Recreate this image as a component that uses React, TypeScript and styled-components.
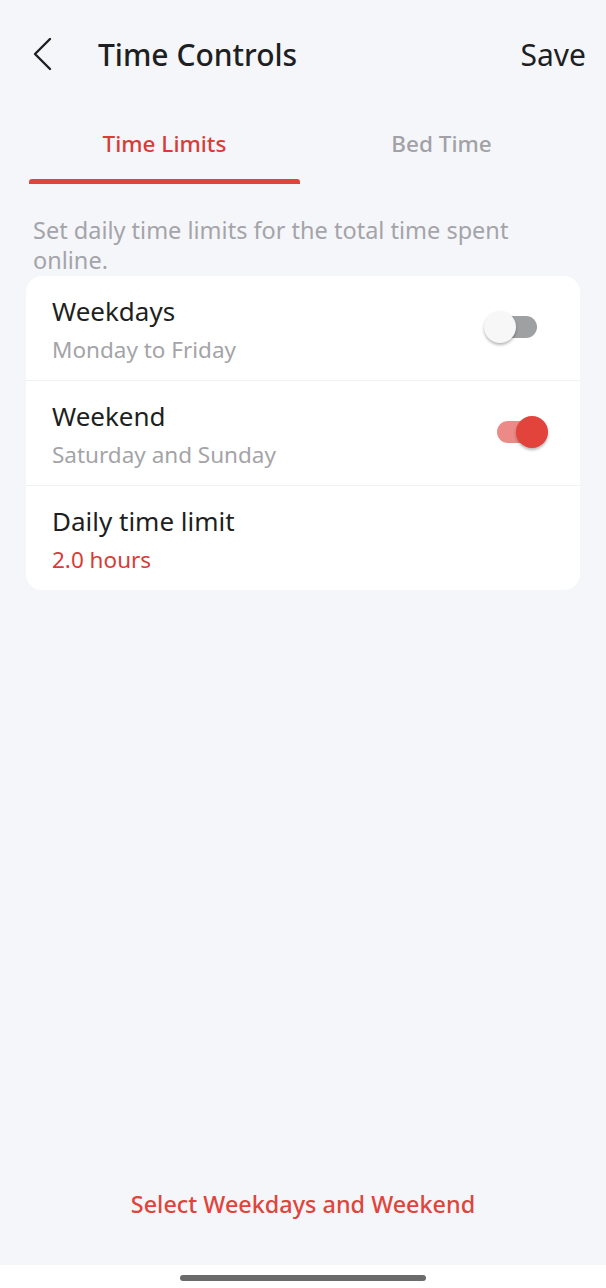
import React, { useState } from "react";
import styled, { createGlobalStyle } from "styled-components";

const Global = createGlobalStyle`
  html, body { margin: 0; padding: 0; background: #f5f6fa; }
  body { font-family: "Noto Sans", "Lato", sans-serif; -webkit-font-smoothing: antialiased; }
  * { box-sizing: border-box; }
`;

const Screen = styled.div`
  width: 606px;
  height: 1288px;
  display: flex;
  flex-direction: column;
  background: #f5f6fa;
`;

const Header = styled.header`
  height: 108px;
  display: flex;
  align-items: center;
  padding: 0 20px 0 31px;
`;

const BackButton = styled.button`
  width: 28px;
  height: 40px;
  border: 0;
  padding: 0;
  background: none;
  display: flex;
  align-items: center;
  justify-content: flex-start;
  color: #1d1f22;
`;

const Title = styled.h1`
  margin: 0 0 0 39px;
  flex: 1;
  font-size: 30px;
  font-weight: 500;
  color: #1d1f22;
`;

const SaveButton = styled.button`
  border: 0;
  background: none;
  padding: 0;
  font-family: inherit;
  font-size: 30px;
  font-weight: 400;
  color: #1d1f22;
`;

const TabBar = styled.div`
  display: flex;
  gap: 6px;
  padding: 0 29px;
`;

const Tab = styled.div<{ $active?: boolean }>`
  flex: 1;
  height: 76px;
  display: flex;
  flex-direction: column;
  align-items: center;
  justify-content: space-between;
  padding-top: 20px;
  font-size: 22.5px;
  font-weight: 500;
  color: ${(p) => (p.$active ? "#d93b36" : "#a1a1a6")};
`;

const Indicator = styled.div<{ $active?: boolean }>`
  width: 100%;
  height: 5px;
  border-radius: 3px 3px 0 0;
  background: ${(p) => (p.$active ? "#e2433b" : "transparent")};
`;

const Description = styled.p`
  margin: 31px 40px 1px 33px;
  font-size: 23.5px;
  line-height: 30px;
  color: #a4a4a9;
`;

const Card = styled.div`
  margin: 0 26px;
  background: #ffffff;
  border-radius: 16px;
  overflow: hidden;
`;

const Row = styled.div`
  height: 104px;
  display: flex;
  align-items: flex-start;
  padding: 19px 32px 0 26px;
  & + & { border-top: 1px solid #f0f1f4; height: 105px; }
`;

const RowText = styled.div`
  flex: 1;
  display: flex;
  flex-direction: column;
  gap: 8px;
`;

const RowTitle = styled.div`
  font-size: 26px;
  color: #1d1f22;
  line-height: 32px;
`;

const RowSub = styled.div<{ $accent?: boolean }>`
  font-size: 22.5px;
  line-height: 30px;
  color: ${(p) => (p.$accent ? "#d93b36" : "#a4a4a8")};
`;

const SwitchBox = styled.button`
  position: relative;
  width: 64px;
  height: 34px;
  margin-top: 15px;
  border: 0;
  padding: 0;
  background: none;
`;

const Track = styled.span<{ $on: boolean }>`
  position: absolute;
  left: 13px;
  top: 6px;
  width: 40px;
  height: 22px;
  border-radius: 11px;
  background: ${(p) => (p.$on ? "#ec8a87" : "#9fa0a2")};
`;

const Thumb = styled.span<{ $on: boolean }>`
  position: absolute;
  top: 1px;
  left: ${(p) => (p.$on ? "32px" : "0px")};
  width: 32px;
  height: 32px;
  border-radius: 50%;
  background: ${(p) => (p.$on ? "#e2433b" : "#f7f7f7")};
  box-shadow: 0 2px 3px rgba(0, 0, 0, 0.28);
`;

const Spacer = styled.div`
  flex: 1;
`;

const FooterAction = styled.button`
  align-self: center;
  border: 0;
  background: none;
  font-family: inherit;
  font-size: 23.4px;
  line-height: 32px;
  font-weight: 500;
  color: #e0443b;
  margin-bottom: 45px;
  padding: 0;
`;

const HomeBar = styled.div`
  height: 23px;
  background: #ffffff;
  display: flex;
  justify-content: center;
  padding-top: 10px;
`;

const HomeIndicator = styled.div`
  width: 246px;
  height: 6px;
  border-radius: 3px;
  background: #6b6b6b;
`;

function Switch({ on, onToggle }: { on: boolean; onToggle: () => void }) {
  return (
    <SwitchBox onClick={onToggle} aria-pressed={on}>
      <Track $on={on} />
      <Thumb $on={on} />
    </SwitchBox>
  );
}

export default function App() {
  const [weekdays, setWeekdays] = useState(false);
  const [weekend, setWeekend] = useState(true);
  return (
    <>
      <Global />
      <Screen>
        <Header>
          <BackButton aria-label="Back">
            <svg width="22" height="34" viewBox="0 0 22 34" fill="none">
              <path d="M19 2 L4 17 L19 32" stroke="#1d1f22" strokeWidth="2.4" strokeLinecap="round" strokeLinejoin="round" />
            </svg>
          </BackButton>
          <Title>Time Controls</Title>
          <SaveButton>Save</SaveButton>
        </Header>
        <TabBar>
          <Tab $active>
            Time Limits
            <Indicator $active />
          </Tab>
          <Tab>
            Bed Time
            <Indicator />
          </Tab>
        </TabBar>
        <Description>Set daily time limits for the total time spent online.</Description>
        <Card>
          <Row>
            <RowText>
              <RowTitle>Weekdays</RowTitle>
              <RowSub>Monday to Friday</RowSub>
            </RowText>
            <Switch on={weekdays} onToggle={() => setWeekdays(!weekdays)} />
          </Row>
          <Row>
            <RowText>
              <RowTitle>Weekend</RowTitle>
              <RowSub>Saturday and Sunday</RowSub>
            </RowText>
            <Switch on={weekend} onToggle={() => setWeekend(!weekend)} />
          </Row>
          <Row>
            <RowText>
              <RowTitle>Daily time limit</RowTitle>
              <RowSub $accent>2.0 hours</RowSub>
            </RowText>
          </Row>
        </Card>
        <Spacer />
        <FooterAction>Select Weekdays and Weekend</FooterAction>
        <HomeBar>
          <HomeIndicator />
        </HomeBar>
      </Screen>
    </>
  );
}
